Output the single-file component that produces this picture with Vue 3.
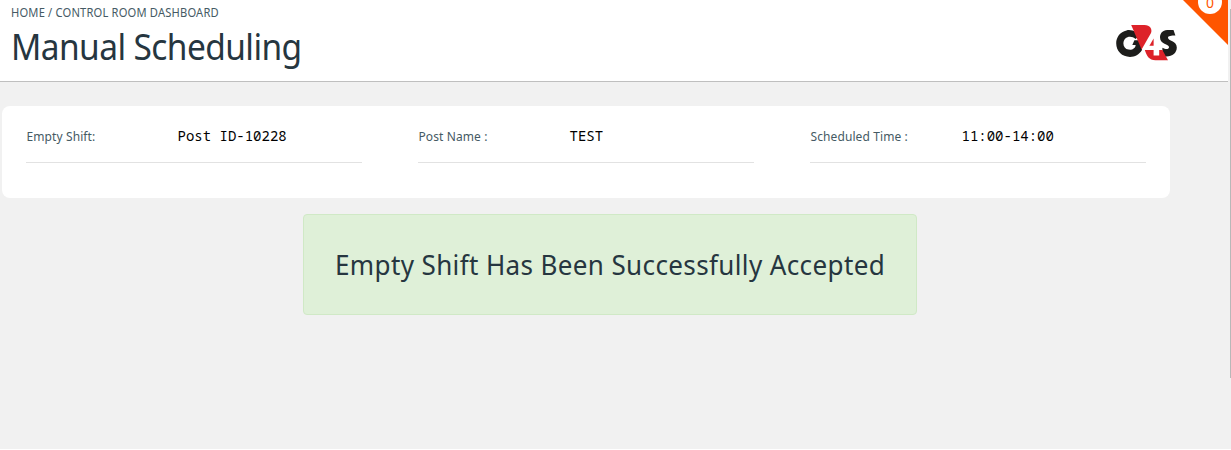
<script setup>
const fields = [
  { label: 'Empty Shift:', value: 'Post ID-10228' },
  { label: 'Post Name :', value: 'TEST' },
  { label: 'Scheduled Time :', value: '11:00-14:00' },
]
</script>

<template>
  <div class="page">
    <header class="header">
      <div>
        <div class="crumb">HOME / CONTROL ROOM DASHBOARD</div>
        <h1>Manual Scheduling</h1>
      </div>
      <svg class="logo" width="62" height="37" viewBox="0 0 62 37">
        <path d="M20 7.2 C17 5.4 13.5 4.6 10.5 5.4 C4.2 6.8 0.2 12 0.2 18.3 C0.2 26.2 6 31.9 14 31.9 C19 31.9 23 29.8 26 25 L24 15.2 H18.4 L16.3 20 H19.6 C19.8 23 16 25.4 12.4 24.6 C9.4 24 7.4 21.6 7.4 18.4 C7.4 14.5 10.4 11.8 14 11.8 C16 11.8 18 12.6 19.5 14 L22 11.8 Z" fill="#1d1d1b" />
        <path d="M57.5 5 H51.2 C46.4 5.2 44 8.6 44 12.4 C44 19.6 53 18.8 53 22 C53 24.4 50 24.8 46.4 22.7 V31 C54.5 33 60.8 29 60.8 22.6 C60.8 15.7 52 16 52 12.8 C52 10.9 55.3 10.6 59.4 10.6 Z" fill="#1d1d1b" />
        <path d="M15.2 0 H28.5 C34 0 36.5 4.2 35 8 L25.6 24.6 Z" fill="#dd2229" />
        <path d="M28.8 25 H37.6 V30.5 H43.2 V25 H46.4 L52 35.3 H39.5 C33 35.3 31 31 28.8 25 Z" fill="#dd2229" />
        <path d="M37.6 13.6 V20.8 H33.4 Z" fill="#dd2229" />
      </svg>
      <svg class="corner" width="45" height="45" viewBox="0 0 45 45">
        <path d="M0 0H45V45Z" fill="#ff5500" />
        <circle cx="27" cy="2" r="12" fill="#fff" />
        <text x="27" y="8" text-anchor="middle">0</text>
      </svg>
    </header>
    <main>
      <section class="card">
        <div v-for="f in fields" :key="f.label" class="field">
          <span class="label">{{ f.label }}</span>
          <span class="value">{{ f.value }}</span>
        </div>
      </section>
      <div class="notice"><span>Empty Shift Has Been Successfully Accepted</span></div>
    </main>
    <div class="scroll"></div>
  </div>
</template>

<style>
body { margin: 0; background: #fff; overflow: hidden; }
</style>
<style scoped>
.page { position: relative; width: 1231px; height: 449px; background: #f1f1f1; font-family: "Noto Sans", "Open Sans", sans-serif; color: #263640; }
.header { position: relative; box-sizing: border-box; width: 1228px; height: 82px; background: #fff; border-bottom: 1px solid #bfbfbf; display: flex; justify-content: space-between; padding: 4px 50px 0 11px; }
.crumb { font-size: 12px; line-height: 18px; letter-spacing: 0.19px; color: #455a64; white-space: nowrap; transform: scaleX(0.93); transform-origin: 0 0; }
h1 { margin: 0; font-size: 36px; line-height: 50px; font-weight: 400; letter-spacing: -0.63px; white-space: nowrap; transform: scaleX(0.93); transform-origin: 0 0; }
.logo { margin-top: 21px; }
.corner { position: absolute; top: 0; right: 0; }
.corner text { font: 14px "Noto Sans", sans-serif; fill: #ff5500; }
.card { box-sizing: border-box; width: 1168px; height: 92px; margin: 24px 0 0 2px; padding: 0 24px; background: #fff; border-radius: 8px; display: flex; gap: 56px; }
.field { box-sizing: border-box; width: 336px; height: 57px; border-bottom: 1px solid #e2e2e2; display: flex; align-items: center; padding: 4px 0 0 0.5px; }
.label { width: 151px; font-size: 12px; letter-spacing: 0.1px; color: #455a64; white-space: nowrap; }
.value { font: 370 14px "Noto Sans Mono", "DejaVu Sans Mono", monospace; color: #000; white-space: nowrap; padding-bottom: 2px; }
.notice { box-sizing: border-box; width: 614px; height: 101px; margin: 16px 0 0 303px; padding-left: 31px; background: #dff0d8; border: 1px solid #d0e9c6; border-radius: 4px; font-size: 28px; line-height: 99px; white-space: nowrap; }
.notice span { display: inline-block; letter-spacing: 0.39px; transform: scaleX(0.93); transform-origin: 0 0; }
.scroll { position: absolute; right: 0; top: 9px; width: 1px; height: 369px; background: #b8b8b8; }
</style>
